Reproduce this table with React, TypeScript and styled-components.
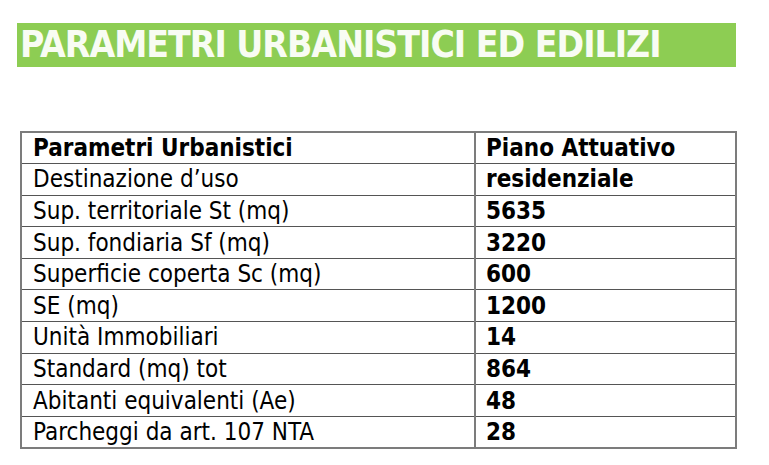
import styled, { createGlobalStyle } from "styled-components";

const GlobalStyle = createGlobalStyle`
  html, body {
    margin: 0;
    padding: 0;
    background: #ffffff;
  }
  body {
    font-family: "DejaVu Sans Condensed", "DejaVu Sans", Verdana, sans-serif;
  }
`;

const rows: [string, string][] = [
  ["Destinazione d’uso", "residenziale"],
  ["Sup. territoriale St (mq)", "5635"],
  ["Sup. fondiaria Sf (mq)", "3220"],
  ["Superficie coperta Sc (mq)", "600"],
  ["SE (mq)", "1200"],
  ["Unità Immobiliari", "14"],
  ["Standard (mq) tot", "864"],
  ["Abitanti equivalenti (Ae)", "48"],
  ["Parcheggi da art. 107 NTA", "28"],
];

function App() {
  return (
    <Page>
      <GlobalStyle />
      <Banner>
        <BannerTitle>PARAMETRI URBANISTICI ED EDILIZI</BannerTitle>
      </Banner>

      <Table>
        <tbody>
          <Row>
            <LabelCell bold>Parametri Urbanistici</LabelCell>
            <ValueCell>Piano Attuativo</ValueCell>
          </Row>
          {rows.map(([label, value]) => (
            <Row key={label}>
              <LabelCell>{label}</LabelCell>
              <ValueCell>{value}</ValueCell>
            </Row>
          ))}
        </tbody>
      </Table>
    </Page>
  );
}

export default App;

const Page = styled.div`
  width: 769px;
  height: 465px;
  padding: 23px 0 0 17px;
  box-sizing: border-box;
  display: flex;
  flex-direction: column;
`;

const Banner = styled.div`
  width: 719px;
  height: 44px;
  background: #8dcd53;
  display: flex;
  align-items: center;
  padding-left: 3px;
  box-sizing: border-box;
`;

const BannerTitle = styled.h1`
  margin: 0;
  color: #f8fcf3;
  font-family: "DejaVu Sans Condensed", "DejaVu Sans", sans-serif;
  font-weight: bold;
  font-size: 37px;
  line-height: 44px;
  letter-spacing: -1px;
  white-space: nowrap;
`;

const Table = styled.table`
  margin: 64px 0 0 3px;
  width: 717px;
  border-collapse: collapse;
  border: 2px solid #7c7c7c;
`;

const Row = styled.tr`
  height: 31.6px;
  border-bottom: 1px solid #555555;
`;

const LabelCell = styled.td<{ bold?: boolean }>`
  width: 441px;
  padding: 0 0 0 11px;
  border-right: 2px solid #7c7c7c;
  font-size: 24px;
  font-weight: ${(p) => (p.bold ? "bold" : "normal")};
  color: #000000;
  white-space: nowrap;
  line-height: 30px;
`;

const ValueCell = styled.td`
  padding: 0 0 0 10px;
  font-size: 24px;
  font-weight: bold;
  color: #000000;
  white-space: nowrap;
  line-height: 30px;
`;
